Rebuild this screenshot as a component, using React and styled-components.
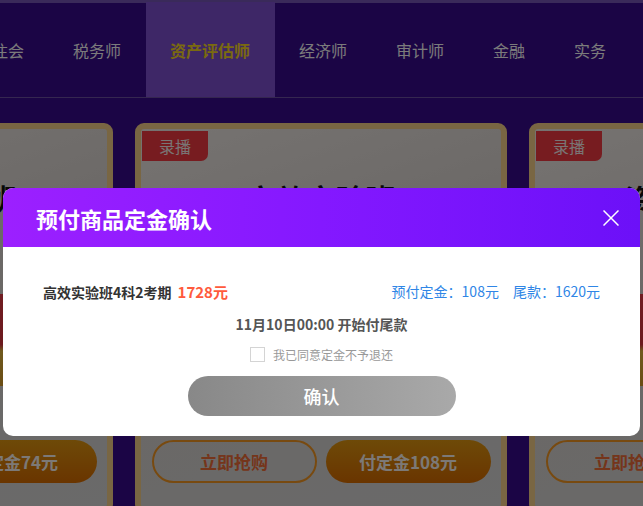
import React from 'react'
import styled, { createGlobalStyle } from 'styled-components'

const GlobalStyle = createGlobalStyle`
  html, body {
    margin: 0;
    padding: 0;
    width: 643px;
    height: 506px;
    overflow: hidden;
    font-family: "Noto Sans CJK SC", "Noto Sans", "Liberation Sans", sans-serif;
  }
`;

const Page = styled.div`
  position: relative;
  width: 643px;
  height: 506px;
  overflow: hidden;
  background: #360a8a;
`;

const TopStrip = styled.div`
  height: 3px;
  background: #7454b4;
`;

const Nav = styled.nav`
  display: flex;
  align-items: stretch;
  height: 94px;
  margin-left: -32px;
  border-bottom: 1px solid #6a4fa0;
  white-space: nowrap;
`;

const NavItem = styled.div`
  display: flex;
  align-items: center;
  padding: 0 25px 0 24px;
  font-size: 16px;
  color: ${props => props.active ? '#f4d420' : '#f6f6f6'};
  font-weight: ${props => props.active ? 700 : 400};
  background: ${props => props.active ? '#7c4ece' : 'transparent'};
  margin-top: ${props => props.active ? '-1px' : '0'};
`;

const NavDivider = styled.div`
  align-self: center;
  width: 1px;
  height: 30px;
  background: #9480c0;
  visibility: ${props => props.hidden ? 'hidden' : 'visible'};
`;

const CardRow = styled.div`
  display: flex;
  gap: 22px;
  margin-top: 25px;
  margin-left: -259px;
`;

const Card = styled.div`
  position: relative;
  flex: 0 0 auto;
  box-sizing: border-box;
  width: 372px;
  height: 390px;
  border: 6px solid #f2cc86;
  border-radius: 9px;
  background: linear-gradient(160deg, #ece6e2 0%, #d6d0cc 45%, #d4d4d4 100%);
  display: flex;
  flex-direction: column;
  align-items: center;
  padding: 0 10px;
`;

const Tag = styled.div`
  position: absolute;
  top: 2px;
  left: 1px;
  width: 66px;
  height: 30px;
  display: flex;
  align-items: center;
  justify-content: center;
  background: #ee3840;
  color: #f3eaea;
  font-size: 16px;
  border-radius: 0 0 7px 0;
`;

const CardTitle = styled.div`
  margin-top: 48px;
  font-size: 29px;
  font-weight: 700;
  color: #111;
  letter-spacing: 1px;
`;

const CardSub = styled.div`
  margin-top: 14px;
  font-size: 15px;
  color: #333;
`;

const Poster = styled.div`
  align-self: stretch;
  margin-top: 40px;
  height: 92px;
  border-radius: 4px;
  background: linear-gradient(180deg, #e23a44 0%, #d8343c 55%, #e0b43c 62%, #d69a2a 100%);
`;

const ButtonRow = styled.div`
  margin-top: auto;
  display: flex;
  gap: 9px;
  align-self: stretch;
  justify-content: center;
  margin-bottom: 24px;
`;

const OutlineButton = styled.div`
  box-sizing: border-box;
  width: 165px;
  height: 43px;
  border-radius: 22px;
  border: 2px solid #f09420;
  display: flex;
  align-items: center;
  justify-content: center;
  color: #ea6a36;
  font-size: 17px;
  font-weight: 700;
`;

const FillButton = styled(OutlineButton)`
  border: none;
  color: #f8f2ee;
  background: linear-gradient(180deg, #dc9410 0%, #d46a00 100%);
`;

const Overlay = styled.div`
  position: absolute;
  inset: 0;
  background: rgba(0, 0, 0, 0.5);
  display: flex;
  justify-content: center;
  align-items: flex-start;
  padding-top: 188px;
`;

const Modal = styled.div`
  width: 637px;
  background: #fff;
  border-radius: 10px;
  overflow: hidden;
`;

const ModalHeader = styled.div`
  height: 59px;
  display: flex;
  align-items: center;
  justify-content: space-between;
  padding: 0 21px 0 33px;
  background: linear-gradient(90deg, #9c20ff 0%, #8418ff 50%, #6c10f8 100%);
`;

const ModalTitle = styled.h2`
  margin: 0;
  font-size: 22px;
  font-weight: 700;
  color: #fff;
`;

const CloseButton = styled.button`
  border: 0;
  padding: 0;
  background: none;
  width: 16px;
  height: 16px;
  display: flex;
  cursor: pointer;
`;

const ModalBody = styled.div`
  display: flex;
  flex-direction: column;
  align-items: center;
  padding: 34px 40px 20px;
`;

const InfoRow = styled.div`
  align-self: stretch;
  display: flex;
  justify-content: space-between;
  align-items: center;
  height: 20px;
`;

const Product = styled.div`
  font-size: 14px;
  font-weight: 700;
  color: #333;
`;

const Price = styled.span`
  margin-left: 6px;
  font-size: 15px;
  color: #ff5a3c;
`;

const Deposit = styled.div`
  display: flex;
  gap: 14px;
  font-size: 14px;
  color: #2f86e6;
`;

const StartLine = styled.div`
  margin-top: 13px;
  height: 20px;
  line-height: 20px;
  font-size: 14px;
  font-weight: 700;
  color: #555;
`;

const Agree = styled.label`
  margin-top: 10px;
  height: 20px;
  display: flex;
  align-items: center;
  gap: 8px;
  font-size: 12px;
  color: #999;
`;

const Box = styled.span`
  box-sizing: border-box;
  width: 15px;
  height: 15px;
  border: 1px solid #d4d4d4;
  background: #fff;
`;

const ConfirmButton = styled.button`
  margin-top: 12px;
  width: 268px;
  height: 40px;
  border: 0;
  border-radius: 20px;
  background: linear-gradient(90deg, #888888 0%, #a9a9a9 100%);
  color: #fff;
  font-family: inherit;
  font-size: 18px;
  font-weight: 500;
`;

const navItems = ['注会', '税务师', '资产评估师', '经济师', '审计师', '金融', '实务', 'CMA'];
const activeIndex = 2;

const cards = [
  { title: '税务师实验班', sub: '2科联报', actions: ['立即抢购', '付定金74元'] },
  { title: '高效实验班', sub: '4科2考期', actions: ['立即抢购', '付定金108元'] },
  { title: '资产评估精讲', sub: '全科联报', actions: ['立即抢购', '付定金98元'] },
];

export default function App() {
  return (
    <Page>
      <GlobalStyle />
      <TopStrip />
      <Nav>
        {navItems.map((item, i) => (
          <React.Fragment key={item}>
            {i > 0 && <NavDivider hidden={i === activeIndex || i === activeIndex + 1} />}
            <NavItem active={i === activeIndex}>{item}</NavItem>
          </React.Fragment>
        ))}
      </Nav>

      <CardRow>
        {cards.map(card => (
          <Card key={card.title}>
            <Tag>录播</Tag>
            <CardTitle>{card.title}</CardTitle>
            <CardSub>{card.sub}</CardSub>
            <Poster />
            <ButtonRow>
              <OutlineButton>{card.actions[0]}</OutlineButton>
              <FillButton>{card.actions[1]}</FillButton>
            </ButtonRow>
          </Card>
        ))}
      </CardRow>

      <Overlay>
        <Modal>
          <ModalHeader>
            <ModalTitle>预付商品定金确认</ModalTitle>
            <CloseButton aria-label="关闭">
              <svg width="16" height="16" viewBox="0 0 16 16">
                <path d="M0.5 0.5L15.5 15.5M15.5 0.5L0.5 15.5" stroke="#fff" strokeWidth="1.5" fill="none" />
              </svg>
            </CloseButton>
          </ModalHeader>
          <ModalBody>
            <InfoRow>
              <Product>
                高效实验班4科2考期<Price>1728元</Price>
              </Product>
              <Deposit>
                <span>预付定金：108元</span>
                <span>尾款：1620元</span>
              </Deposit>
            </InfoRow>
            <StartLine>11月10日00:00 开始付尾款</StartLine>
            <Agree>
              <Box />
              我已同意定金不予退还
            </Agree>
            <ConfirmButton>确认</ConfirmButton>
          </ModalBody>
        </Modal>
      </Overlay>
    </Page>
  );
}
